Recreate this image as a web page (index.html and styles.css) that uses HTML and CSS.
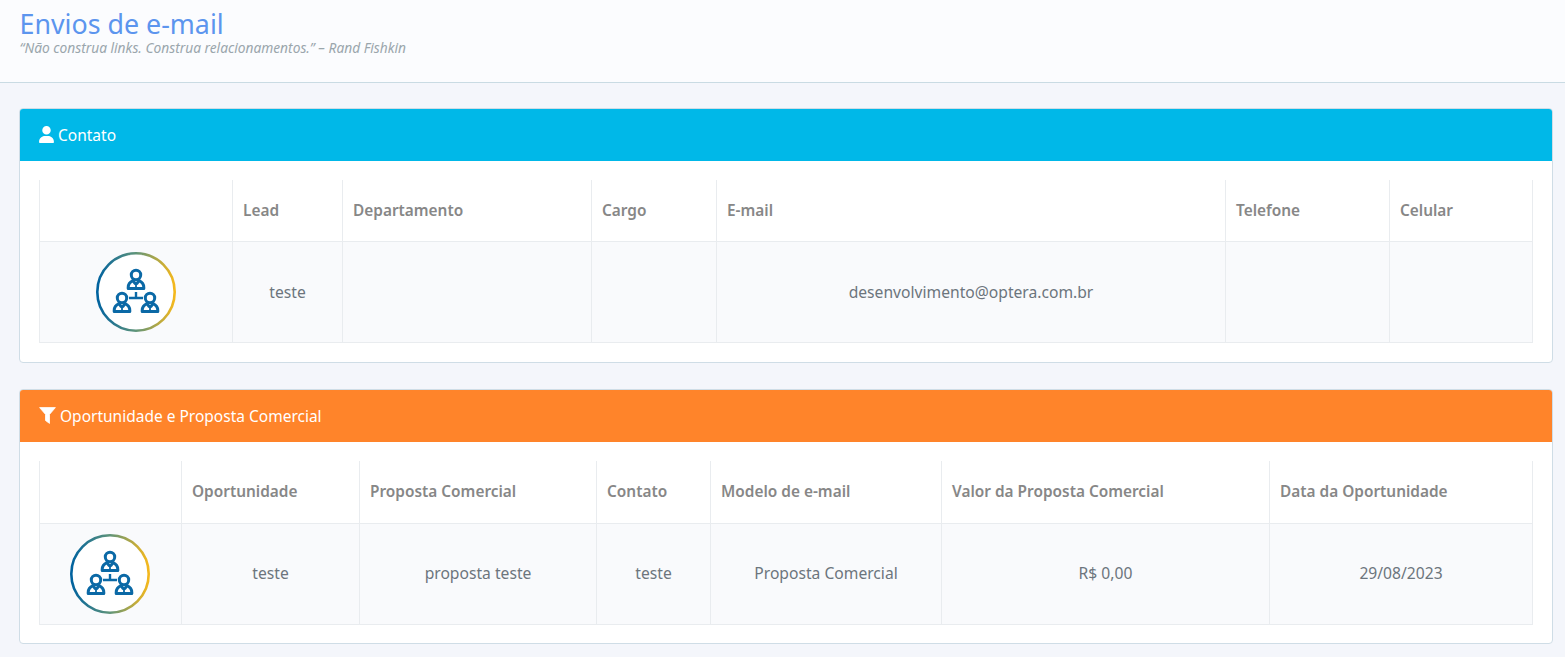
FILE: index.html
```html
<!DOCTYPE html>
<html lang="pt-BR">
<head>
<meta charset="utf-8">
<title>Envios de e-mail</title>
<link rel="stylesheet" href="styles.css">
</head>
<body>
<svg class="defs" width="0" height="0" aria-hidden="true">
  <defs>
    <linearGradient id="ring" x1="0" y1="0" x2="1" y2="0">
      <stop offset="0" stop-color="#00629f"/>
      <stop offset=".5" stop-color="#5f9479"/>
      <stop offset="1" stop-color="#f5b81c"/>
    </linearGradient>
    <g id="person">
      <ellipse cx="0" cy="-5" rx="4.700" ry="4.700" fill="none" stroke="#0b69a6" stroke-width="3"/>
      <path d="M-3 .6C-6.500 2-7.800 4.500-7.800 7.500V8.600H7.800V7.500C7.800 4.500 6.500 2 3 .6L1 3.500H-1Z" fill="none" stroke="#0b69a6" stroke-width="3" stroke-linejoin="round"/>
      <path d="M0 3.500V8.500" stroke="#0b69a6" stroke-width="1.800"/>
    </g>
    <symbol id="org" viewBox="0 0 80 80">
      <circle cx="40" cy="40" r="38.700" fill="#fff" stroke="url(#ring)" stroke-width="2.600"/>
      <use href="#person" x="40" y="28"/>
      <use href="#person" x="26" y="51"/>
      <use href="#person" x="54" y="51"/>
      <path d="M33 46H47M40 40V46" stroke="#0b69a6" stroke-width="2.400"/>
    </symbol>
  </defs>
</svg>
<header class="page-head">
  <h1>Envios de e-mail</h1>
  <p>“Não construa links. Construa relacionamentos.” – Rand Fishkin</p>
</header>
<main class="content">
  <section class="card">
    <h2 class="card-title info">
      <svg class="ico" viewBox="0 0 448 512" width="15" height="17"><path fill="#fff" d="M224 256a128 128 0 1 0 0-256 128 128 0 1 0 0 256zm-45.700 48C79.800 304 0 383.800 0 482.300 0 498.700 13.300 512 29.700 512h388.600c16.400 0 29.700-13.300 29.700-29.700C448 383.800 368.200 304 269.700 304h-91.400z"/></svg>
      Contato
    </h2>
    <div class="card-body">
      <table class="t1">
        <colgroup><col class="a1"><col class="a2"><col class="a3"><col class="a4"><col class="a5"><col class="a6"><col class="a7"></colgroup>
        <thead><tr><th></th><th>Lead</th><th>Departamento</th><th>Cargo</th><th>E-mail</th><th>Telefone</th><th>Celular</th></tr></thead>
        <tbody><tr>
          <td><svg class="org"><use href="#org"/></svg></td>
          <td>teste</td><td></td><td></td><td>desenvolvimento@optera.com.br</td><td></td><td></td>
        </tr></tbody>
      </table>
    </div>
  </section>
  <section class="card">
    <h2 class="card-title warn">
      <svg class="ico" viewBox="0 0 17 17" width="17" height="17"><path fill="#fff" stroke="#fff" stroke-width=".8" stroke-linejoin="round" d="M.6.6H16.400L10.500 7.400V16.400L6.500 13.500V7.400Z"/></svg>
      Oportunidade e Proposta Comercial
    </h2>
    <div class="card-body">
      <table class="t2">
        <colgroup><col class="b1"><col class="b2"><col class="b3"><col class="b4"><col class="b5"><col class="b6"><col class="b7"></colgroup>
        <thead><tr><th></th><th>Oportunidade</th><th>Proposta Comercial</th><th>Contato</th><th>Modelo de e-mail</th><th>Valor da Proposta Comercial</th><th>Data da Oportunidade</th></tr></thead>
        <tbody><tr>
          <td><svg class="org"><use href="#org"/></svg></td>
          <td>teste</td><td>proposta teste</td><td>teste</td><td>Proposta Comercial</td><td>R$ 0,00</td><td>29/08/2023</td>
        </tr></tbody>
      </table>
    </div>
  </section>
</main>
</body>
</html>
```

FILE: styles.css
```css
* { box-sizing: border-box; }
html, body { margin: 0; height: 657px; overflow: hidden; }
body {
  background: #f4f6fb;
  font-family: "Noto Sans", "Liberation Sans", sans-serif;
  font-size: 15.65px;
  color: #6c757d;
}
.defs { position: absolute; }
.page-head {
  height: 83px;
  padding: 7px 19.5px 0;
  background: #fbfcfe;
  border-bottom: 1px solid #c9dbe3;
}
.page-head h1 {
  margin: 0;
  font-size: 26.8px;
  line-height: 33px;
  font-weight: 400;
  color: #5c95ee;
}
.page-head p {
  margin: 0;
  font-size: 13.75px;
  line-height: 16px;
  font-style: italic;
  color: #9aa6ac;
}
.content {
  display: flex;
  flex-direction: column;
  gap: 26px;
  padding: 25px 12px 0 19px;
}
.card {
  height: 255px;
  background: #fff;
  border: 1px solid #cfdde6;
  border-radius: 4px;
  overflow: hidden;
}
.card-title {
  display: flex;
  align-items: center;
  gap: 4px;
  height: 52px;
  margin: 0;
  padding: 0 19px 1px;
  font-size: 15.5px;
  font-weight: 400;
  color: #fff;
}
.info { background: #00b8e8; }
.warn { background: #ff842a; }
.card-body { padding: 19px 19px 0; }
table {
  width: 1493px;
  table-layout: fixed;
  border-collapse: collapse;
}
th, td {
  border: 1px solid #e9ecef;
  padding: 0 10px;
}
thead tr { height: 61px; }
.t2 thead tr { height: 62px; }
thead th { border-top: 0; font-size: 15.4px; text-align: left; font-weight: 600; color: #878787; background: #fff; }
.t2 thead th { padding-bottom: 1px; }
tbody tr { height: 101px; }
td { text-align: center; background: #f9fafc; }
.t2 td { padding-bottom: 1px; }
.t2 td:first-child { padding: 0 11px 0 9px; }
.org { display: block; width: 80px; height: 80px; margin: 0 auto; }
.a1 { width: 193px; } .a2 { width: 110px; } .a3 { width: 249px; } .a4 { width: 125px; }
.a5 { width: 509px; } .a6 { width: 164px; } .a7 { width: 143px; }
.b1 { width: 142px; } .b2 { width: 178px; } .b3 { width: 237px; } .b4 { width: 114px; }
.b5 { width: 231px; } .b6 { width: 328px; } .b7 { width: 263px; }
```
